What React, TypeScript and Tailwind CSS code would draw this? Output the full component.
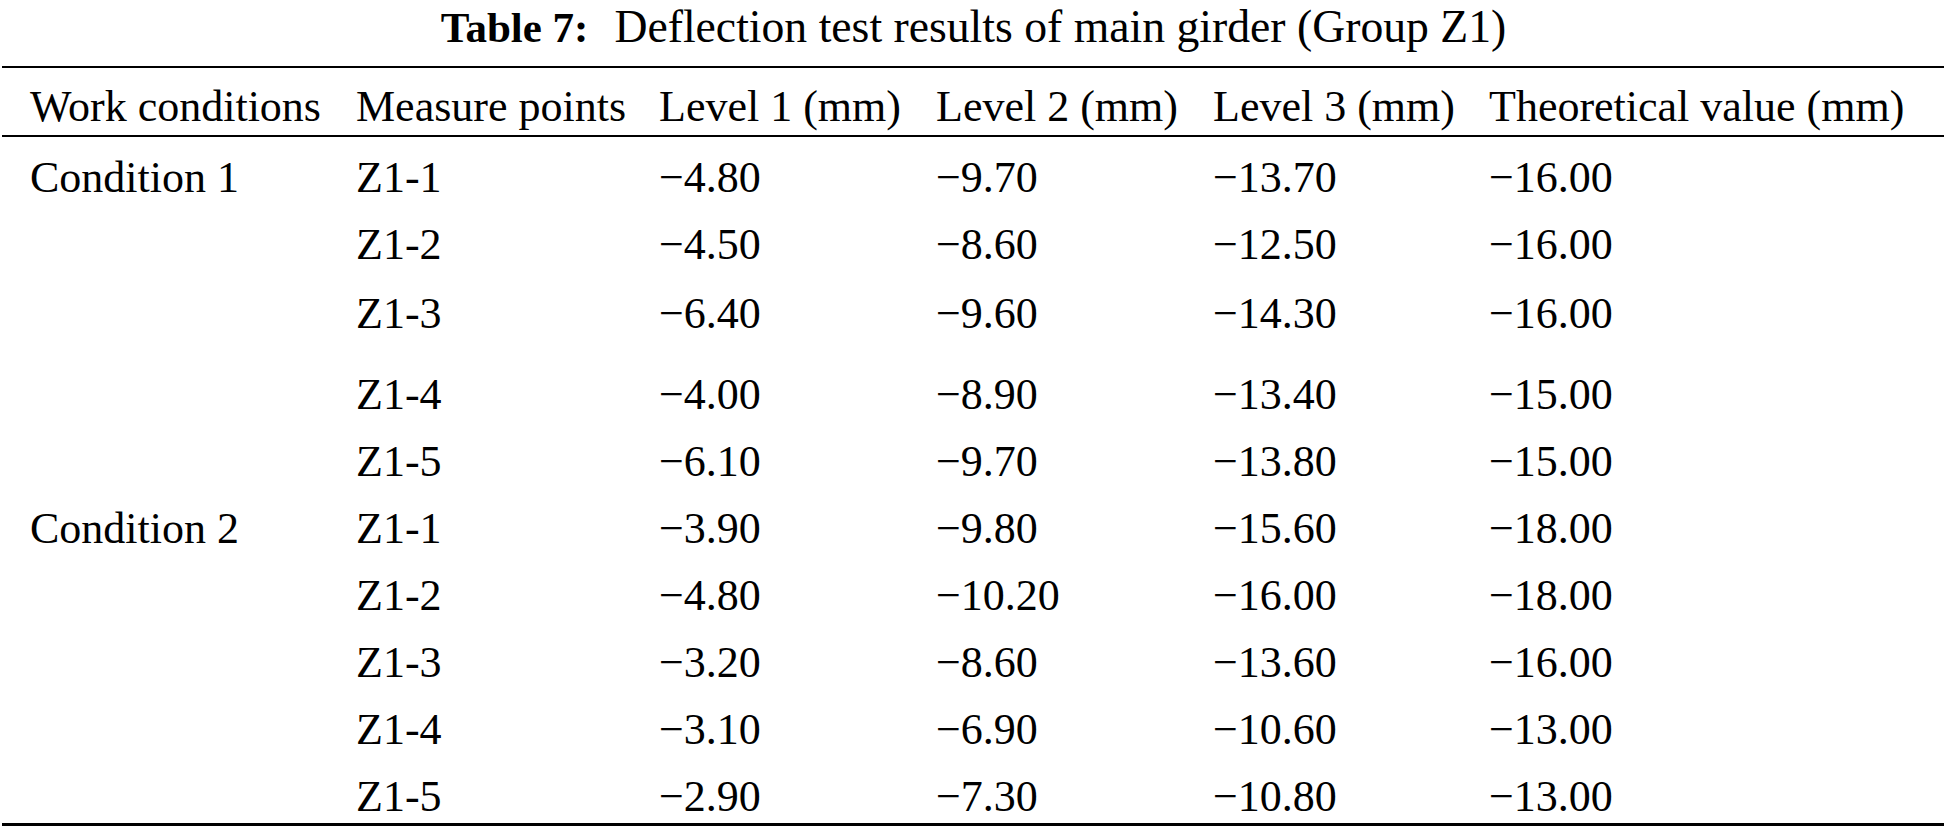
import React from "react";

const rows: { cond: string; pt: string; v: string[]; cls: string }[] = [
  { cond: "Condition 1", pt: "Z1-1", v: ["−4.80", "−9.70", "−13.70", "−16.00"], cls: "h-[67px]" },
  { cond: "", pt: "Z1-2", v: ["−4.50", "−8.60", "−12.50", "−16.00"], cls: "h-[67px]" },
  { cond: "", pt: "Z1-3", v: ["−6.40", "−9.60", "−14.30", "−16.00"], cls: "h-[67px] mt-[2px] mb-[14px]" },
  { cond: "", pt: "Z1-4", v: ["−4.00", "−8.90", "−13.40", "−15.00"], cls: "h-[67px]" },
  { cond: "", pt: "Z1-5", v: ["−6.10", "−9.70", "−13.80", "−15.00"], cls: "h-[67px]" },
  { cond: "Condition 2", pt: "Z1-1", v: ["−3.90", "−9.80", "−15.60", "−18.00"], cls: "h-[67px]" },
  { cond: "", pt: "Z1-2", v: ["−4.80", "−10.20", "−16.00", "−18.00"], cls: "h-[67px]" },
  { cond: "", pt: "Z1-3", v: ["−3.20", "−8.60", "−13.60", "−16.00"], cls: "h-[67px]" },
  { cond: "", pt: "Z1-4", v: ["−3.10", "−6.90", "−10.60", "−13.00"], cls: "h-[67px]" },
  { cond: "", pt: "Z1-5", v: ["−2.90", "−7.30", "−10.80", "−13.00"], cls: "h-[60px] items-start leading-[67px]" },
];

const grid = "grid grid-cols-[326px_303px_277px_277px_276px_1fr] pl-[28px]";

export default function App() {
  return (
    <div
      className="w-[1947px] h-[830px] bg-white text-black text-[44px] leading-none overflow-hidden"
      style={{ fontFamily: '"Liberation Serif", "Times New Roman", serif' }}
    >
      <div className="h-[66px] flex items-center justify-center pb-[12px] whitespace-nowrap">
        <span className="font-bold text-[43px]">Table 7:</span>
        <span className="ml-[26px] text-[45.7px]">Deflection test results of main girder (Group Z1)</span>
      </div>
      <div className="ml-[2px] mr-[3px]">
        <div className="h-[2px] bg-black" />
        <div className={`${grid} h-[67px] items-center pt-[11px] whitespace-nowrap`}>
          <div>Work conditions</div>
          <div>Measure points</div>
          <div>Level 1 (mm)</div>
          <div>Level 2 (mm)</div>
          <div>Level 3 (mm)</div>
          <div>Theoretical value (mm)</div>
        </div>
        <div className="h-[2px] bg-black" />
        <div className="pt-[7px]">
          {rows.map((r, i) => (
            <div key={i} className={`${grid} items-center whitespace-nowrap ${r.cls}`}>
              <div>{r.cond}</div>
              <div>{r.pt}</div>
              {r.v.map((x, j) => (
                <div key={j}>{x}</div>
              ))}
            </div>
          ))}
        </div>
        <div className="h-[3px] bg-black" />
      </div>
    </div>
  );
}
